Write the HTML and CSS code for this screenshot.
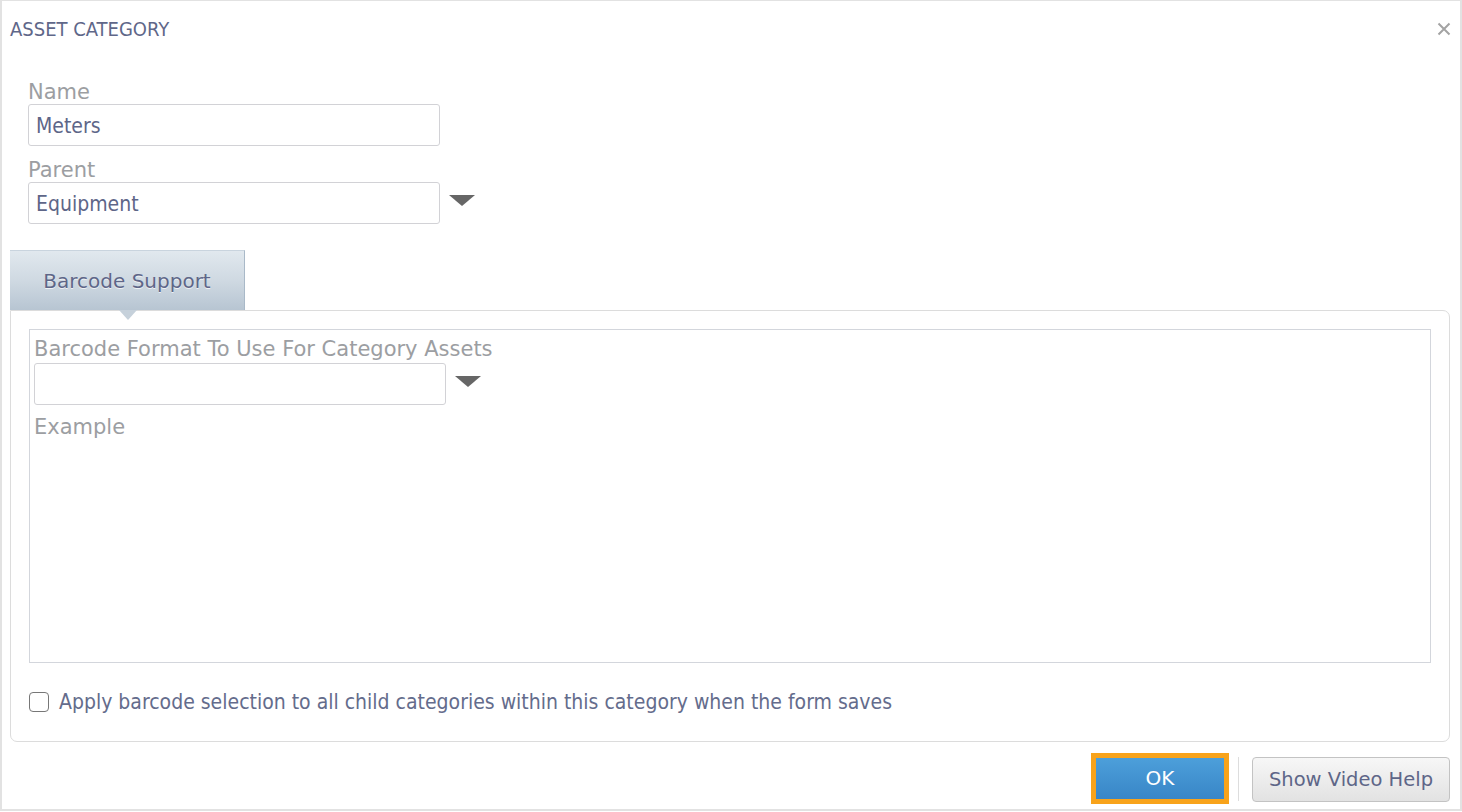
FILE: index.html
```html
<!DOCTYPE html>
<html>
<head>
<meta charset="utf-8">
<title>Asset Category</title>
<link rel="stylesheet" href="styles.css">
</head>
<body>
<div class="dialog">
  <div class="header">
    <span class="title">ASSET CATEGORY</span>
    <span class="close" aria-label="Close">
      <svg width="14" height="14" viewBox="0 0 14 14"><path d="M1.5 1.5L12.5 12.5M12.5 1.5L1.5 12.5" stroke="#a3a3a3" stroke-width="2" fill="none"/></svg>
    </span>
  </div>

  <div class="fields">
    <label class="label">Name</label>
    <div class="row">
      <div class="input">Meters</div>
    </div>
    <label class="label label-next">Parent</label>
    <div class="row">
      <div class="input">Equipment</div>
      <span class="caret"></span>
    </div>
  </div>

  <div class="tabs">
    <div class="tab">Barcode Support</div>
  </div>

  <div class="panel">
    <span class="pointer"></span>
    <div class="inner">
      <div class="label">Barcode Format To Use For Category Assets</div>
      <div class="row">
        <div class="input"></div>
        <span class="caret"></span>
      </div>
      <div class="label example">Example</div>
    </div>
    <div class="check-row">
      <span class="checkbox"></span>
      <span class="check-label">Apply barcode selection to all child categories within this category when the form saves</span>
    </div>
  </div>

  <div class="footer">
    <button class="btn-ok">OK</button>
    <span class="sep"></span>
    <button class="btn-help">Show Video Help</button>
  </div>
</div>
</body>
</html>
```

FILE: styles.css
```css
* { box-sizing: border-box; }
html, body {
  margin: 0;
  padding: 0;
  background: #ffffff;
}
body {
  font-family: "DejaVu Sans Condensed", "DejaVu Sans", sans-serif;
  color: #5e6688;
}
.dialog {
  width: 1462px;
  height: 811px;
  border: 2px solid #e2e2e2;
  border-top: 1px solid #e2e2e2;
  display: flex;
  flex-direction: column;
}
.header {
  height: 55px;
  display: flex;
  align-items: center;
  justify-content: space-between;
  padding: 0 10px 0 8px;
}
.title {
  font-size: 20px;
  color: #5f6789;
}
.close {
  display: flex;
  margin-right: -1px;
  margin-top: 0;
}
.fields {
  padding: 24px 0 0 26px;
}
.label {
  display: block;
  font-family: "DejaVu Sans", sans-serif;
  font-size: 21px;
  line-height: 24px;
  color: #9c9ea2;
}
.label-next {
  margin-top: 12px;
}
.row {
  display: flex;
  align-items: center;
}
.input {
  width: 412px;
  height: 42px;
  border: 1px solid #d2d2d6;
  border-radius: 3px;
  padding: 2px 7px 0 7px;
  font-size: 21px;
  line-height: 38px;
  color: #5e6688;
  background: #fff;
}
.caret {
  width: 0;
  height: 0;
  border-left: 13px solid transparent;
  border-right: 13px solid transparent;
  border-top: 11px solid #666666;
  margin-left: 9px;
  margin-top: -6px;
}
.tabs {
  margin-top: 26px;
  padding-left: 8px;
  display: flex;
}
.tab {
  width: 235px;
  height: 60px;
  background: linear-gradient(to bottom, #e1e8ee 0%, #cfd9e2 50%, #b7c5d2 100%);
  border-top: 1px solid #c9d4de;
  border-right: 1px solid #a9b9c8;
  display: flex;
  align-items: center;
  justify-content: center;
  font-family: "DejaVu Sans", sans-serif;
  font-size: 20px;
  color: #5e6688;
  text-shadow: 0 1px 0 rgba(255,255,255,0.7);
}
.panel {
  position: relative;
  margin: 0 10px 0 8px;
  height: 432px;
  border: 1px solid #dcdcdc;
  border-radius: 0 7px 7px 7px;
  padding: 18px 18px 0 18px;
}
.pointer {
  position: absolute;
  left: 108px;
  top: -1px;
  width: 0;
  height: 0;
  border-left: 9px solid transparent;
  border-right: 9px solid transparent;
  border-top: 10px solid #c6d1db;
}
.inner {
  height: 334px;
  border: 1px solid #d3d6dc;
  padding: 7px 4px 0 4px;
}
.inner .label {
  margin-bottom: 2px;
}
.example {
  margin-top: 10px;
}
.check-row {
  display: flex;
  align-items: center;
  margin-top: 27px;
  height: 24px;
}
.checkbox {
  width: 20px;
  height: 20px;
  border: 1.5px solid #777;
  border-radius: 4px;
  background: #fff;
}
.check-label {
  margin-left: 10px;
  font-size: 21px;
  color: #646c8c;
}
.footer {
  flex: 1;
  display: flex;
  align-items: center;
  justify-content: flex-end;
  padding: 5px 10px 0 0;
}
.btn-ok {
  width: 138px;
  height: 51px;
  border: 5px solid #f8a31b;
  background: linear-gradient(to bottom, #4d9fda 0%, #3886c7 100%);
  color: #ffffff;
  font-family: "DejaVu Sans", sans-serif;
  font-size: 20px;
  padding: 0;
}
.sep {
  width: 1px;
  height: 44px;
  background: #dddddd;
  margin: 2px 13px 0 9px;
}
.btn-help {
  width: 198px;
  height: 45px;
  margin-top: 3px;
  border: 1px solid #c3c3c3;
  border-radius: 4px;
  background: linear-gradient(to bottom, #f7f7f7 0%, #e2e2e2 100%);
  color: #5e6688;
  font-family: "DejaVu Sans", sans-serif;
  font-size: 19.5px;
  padding: 0;
}
```
